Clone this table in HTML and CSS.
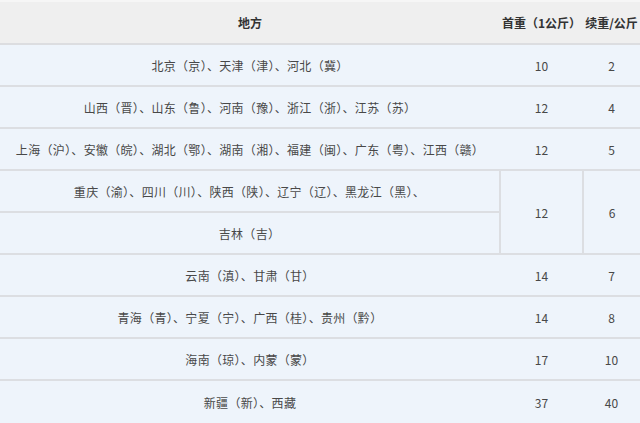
FILE: index.html
```html
<!DOCTYPE html>
<html lang="zh">
<head>
<meta charset="utf-8">
<link rel="stylesheet" href="styles.css">
</head>
<body>
<table class="rates">
  <colgroup>
    <col class="c-place">
    <col class="c-first">
    <col class="c-next">
  </colgroup>
  <thead>
    <tr class="head">
      <th>地方</th>
      <th>首重（1公斤）</th>
      <th>续重/公斤</th>
    </tr>
  </thead>
  <tbody>
    <tr><td class="place">北京（京）、天津（津）、河北（冀）</td><td>10</td><td>2</td></tr>
    <tr><td class="place">山西（晋）、山东（鲁）、河南（豫）、浙江（浙）、江苏（苏）</td><td>12</td><td>4</td></tr>
    <tr><td class="place">上海（沪）、安徽（皖）、湖北（鄂）、湖南（湘）、福建（闽）、广东（粤）、江西（赣）</td><td>12</td><td>5</td></tr>
    <tr><td class="place">重庆（渝）、四川（川）、陕西（陕）、辽宁（辽）、黑龙江（黑）、</td><td class="span" rowspan="2">12</td><td class="span" rowspan="2">6</td></tr>
    <tr><td class="place">吉林（吉）</td></tr>
    <tr><td class="place">云南（滇）、甘肃（甘）</td><td>14</td><td>7</td></tr>
    <tr><td class="place">青海（青）、宁夏（宁）、广西（桂）、贵州（黔）</td><td>14</td><td>8</td></tr>
    <tr><td class="place">海南（琼）、内蒙（蒙）</td><td>17</td><td>10</td></tr>
    <tr class="last"><td class="place">新疆（新）、西藏</td><td>37</td><td>40</td></tr>
  </tbody>
</table>
</body>
</html>
```
FILE: styles.css
```css
html, body {
  margin: 0;
  padding: 0;
  background: #eef4fb;
}
.rates {
  width: 640px;
  border-collapse: collapse;
  table-layout: fixed;
  font-family: "Noto Sans CJK SC", "Microsoft YaHei", sans-serif;
  font-size: 12px;
  color: #484848;
}
.c-place { width: 500px; }
.c-first { width: 83px; }
.c-next { width: 57px; }
.head th {
  height: 41px;
  background: #efefef;
  border-top: 2px solid #f6f6f6;
  border-bottom: 2px solid #dcdde0;
  font-weight: bold;
  color: #333;
  padding: 0;
  text-align: center;
  white-space: nowrap;
}
.rates td {
  height: 40px;
  padding: 0;
  text-align: center;
  vertical-align: middle;
  background: #eef4fb;
  border-bottom: 2px solid #dcdee2;
  white-space: nowrap;
}
.rates td.place {
  letter-spacing: 0.3px;
}
.rates td.span {
  border-left: 2px solid #dcdee2;
}
.rates tr.last td {
  border-bottom: none;
  height: 43px;
}
```
